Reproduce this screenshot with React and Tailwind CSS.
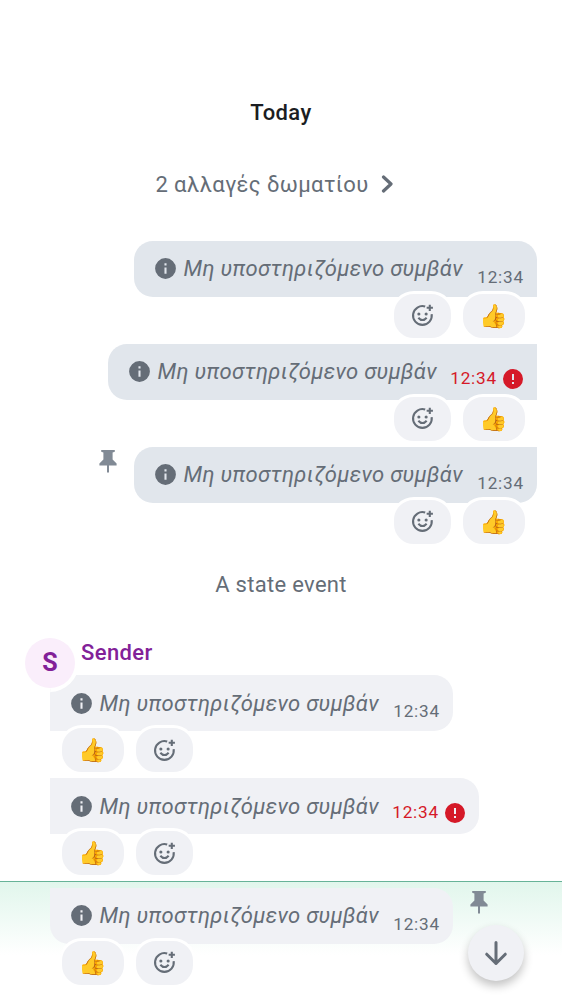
import React from "react";

function InfoIcon() {
  return (
    <svg className="size-[25px] shrink-0" viewBox="0 0 24 24" fill="#656d77">
      <path fillRule="evenodd" d="M12 2a10 10 0 1 1 0 20a10 10 0 0 1 0-20M11 11v6h2v-6zM11 7v2h2V7z" />
    </svg>
  );
}

function ErrorIcon() {
  return (
    <svg className="size-6 shrink-0" viewBox="0 0 24 24" fill="#d51928">
      <path fillRule="evenodd" d="M12 2a10 10 0 1 1 0 20a10 10 0 0 1 0-20M11 7v6h2V7zM11 15v2h2v-2z" />
    </svg>
  );
}

function PinIcon() {
  return (
    <svg className="h-[23px] w-[18px]" viewBox="0 0 18 23" fill="#818a95">
      <path d="M2.2 0H15.8V1.7L13.6 2.5V9.5L17.6 13.5V15.4H10V22.6H8V15.4H.4V13.5L4.4 9.5V2.5L2.2 1.7Z" />
    </svg>
  );
}

function ReactionIcon() {
  return (
    <svg className="size-[25px]" viewBox="0 0 24 24" fill="none" stroke="#656d77" strokeWidth="2">
      <path d="M14.6 3.4A9 9 0 1 0 20.8 10.6" />
      <path d="M8 14.1q4 4.5 8 0" />
      <path d="M19 1.6v6M16 4.6h6" />
      <circle cx="8.5" cy="10.5" r="1.5" fill="#656d77" stroke="none" />
      <circle cx="15.5" cy="10.5" r="1.5" fill="#656d77" stroke="none" />
    </svg>
  );
}

function Reactions({ mine, low }) {
  return (
    <div className={"relative -mt-[6px] flex h-[50px] gap-[6px] " + (mine ? "flex-row-reverse pr-[9px]" : "pl-[9px]")}>
      <div className="flex h-[50px] w-[68px] items-center justify-center rounded-[23px] border-[3px] border-white bg-[#f0f1f5]">
        <span className="font-['Noto_Color_Emoji',sans-serif] text-[23px] leading-none">👍</span>
      </div>
      <div className={"flex h-[50px] w-[63px] items-center justify-center rounded-[23px] border-[3px] border-white bg-[#f0f1f5] " + (low ? "" : "pb-px")}>
        <ReactionIcon />
      </div>
    </div>
  );
}

function Message({ mine, shape, failed, pinned, avatar }) {
  const low = !mine && !pinned;
  return (
    <div className={"flex flex-col " + (mine ? "items-end" : "items-start")}>
      <div className={"flex " + (mine ? "flex-row-reverse" : "")}>
        <div
          className={
            "relative flex h-14 overflow-hidden pl-[18.5px] " +
            (failed ? "w-[429px] " : "w-[403px] ") +
            (mine ? "bg-[#e1e6ec] " : "bg-[#f0f1f5] ") +
            shape
          }
        >
          {avatar && <div className="absolute -top-[42px] -left-[30px] size-[59px] rounded-full bg-white" />}
          <div className={"flex items-center gap-[6px] " + (low ? "pt-px" : "pb-px")}>
            <InfoIcon />
            <span className="text-[22px] leading-8 tracking-[0.3px] whitespace-nowrap text-[#656d77] italic">Μη υποστηριζόμενο συμβάν</span>
          </div>
          <div className={"ml-auto flex items-center text-[17.2px] tracking-[0.8px] " + (failed ? "gap-1 pt-[13px] pr-3 text-[#d51928]" : "pr-[13px] text-[#656d77] " + (low ? "pt-[18px]" : "pt-[17px]"))}>
            <span>12:34</span>
            {failed && <ErrorIcon />}
          </div>
        </div>
        {pinned && <div className={mine ? "mr-[17px] pt-[3px]" : "ml-[17px] pt-[3px]"}><PinIcon /></div>}
      </div>
      <Reactions mine={mine} low={low} />
    </div>
  );
}

export default function App() {
  return (
    <main className="relative h-[1000px] w-[562px] overflow-hidden bg-white font-['Roboto',sans-serif]">
      <h1 className="pt-[97px] text-center text-[22px] leading-8 font-medium tracking-[0.4px] text-[#1b1d22]">Today</h1>
      <div className="mt-[39px] flex h-8 items-center gap-[12.5px] pl-[155.5px] text-[22px] tracking-[0.38px] text-[#656d77]">
        <span>2 αλλαγές δωματίου</span>
        <svg className="h-[18px] w-3" viewBox="0 0 12 18" fill="none" stroke="currentColor" strokeWidth="3.2" strokeLinecap="round" strokeLinejoin="round">
          <path d="M2.5 2l7.5 7L2.5 16" />
        </svg>
      </div>
      <section className="mt-[41px] flex flex-col gap-[3px] pr-[25px]">
        <Message mine shape="rounded-[19px] rounded-br-none" />
        <Message mine failed shape="rounded-l-[19px]" />
        <Message mine pinned shape="rounded-[19px] rounded-tr-none" />
      </section>
      <p className="mt-[22px] h-8 text-center text-[22px] leading-8 tracking-[0.3px] text-[#656d77]">A state event</p>
      <div className="relative z-10 mt-[37px] flex h-[50px] gap-[6px] pl-[25px]">
        <div className="grid size-[50px] place-items-center rounded-full bg-[#faeefb] text-[25px] font-bold text-[#822198]">S</div>
        <span className="text-[22px] leading-[30px] font-medium tracking-[0.4px] text-[#822198]">Sender</span>
      </div>
      <section className="-mt-[13px] flex flex-col gap-[3px] pl-[50px]">
        <Message avatar shape="rounded-[19px] rounded-bl-none" />
        <Message failed shape="rounded-r-[19px]" />
      </section>
      <section className="mt-[3px] h-[119px] border-t border-[#67b398] bg-[linear-gradient(#e1f6ec_0px,#fff_73px)] pt-[6px] pl-[50px]">
        <Message pinned shape="rounded-[19px] rounded-tl-none" />
      </section>
      <button className="absolute top-[925px] left-[468px] grid size-14 place-items-center rounded-full bg-[#f0f1f5] shadow-[0_5px_10px_rgba(0,0,0,0.24)]">
        <svg className="size-[26px]" viewBox="0 0 26 26" fill="none" stroke="#656d77" strokeWidth="3" strokeLinecap="round" strokeLinejoin="round">
          <path d="M13 2.5v21M3.7 14.2l9.3 9.3l9.3-9.3" />
        </svg>
      </button>
    </main>
  );
}
